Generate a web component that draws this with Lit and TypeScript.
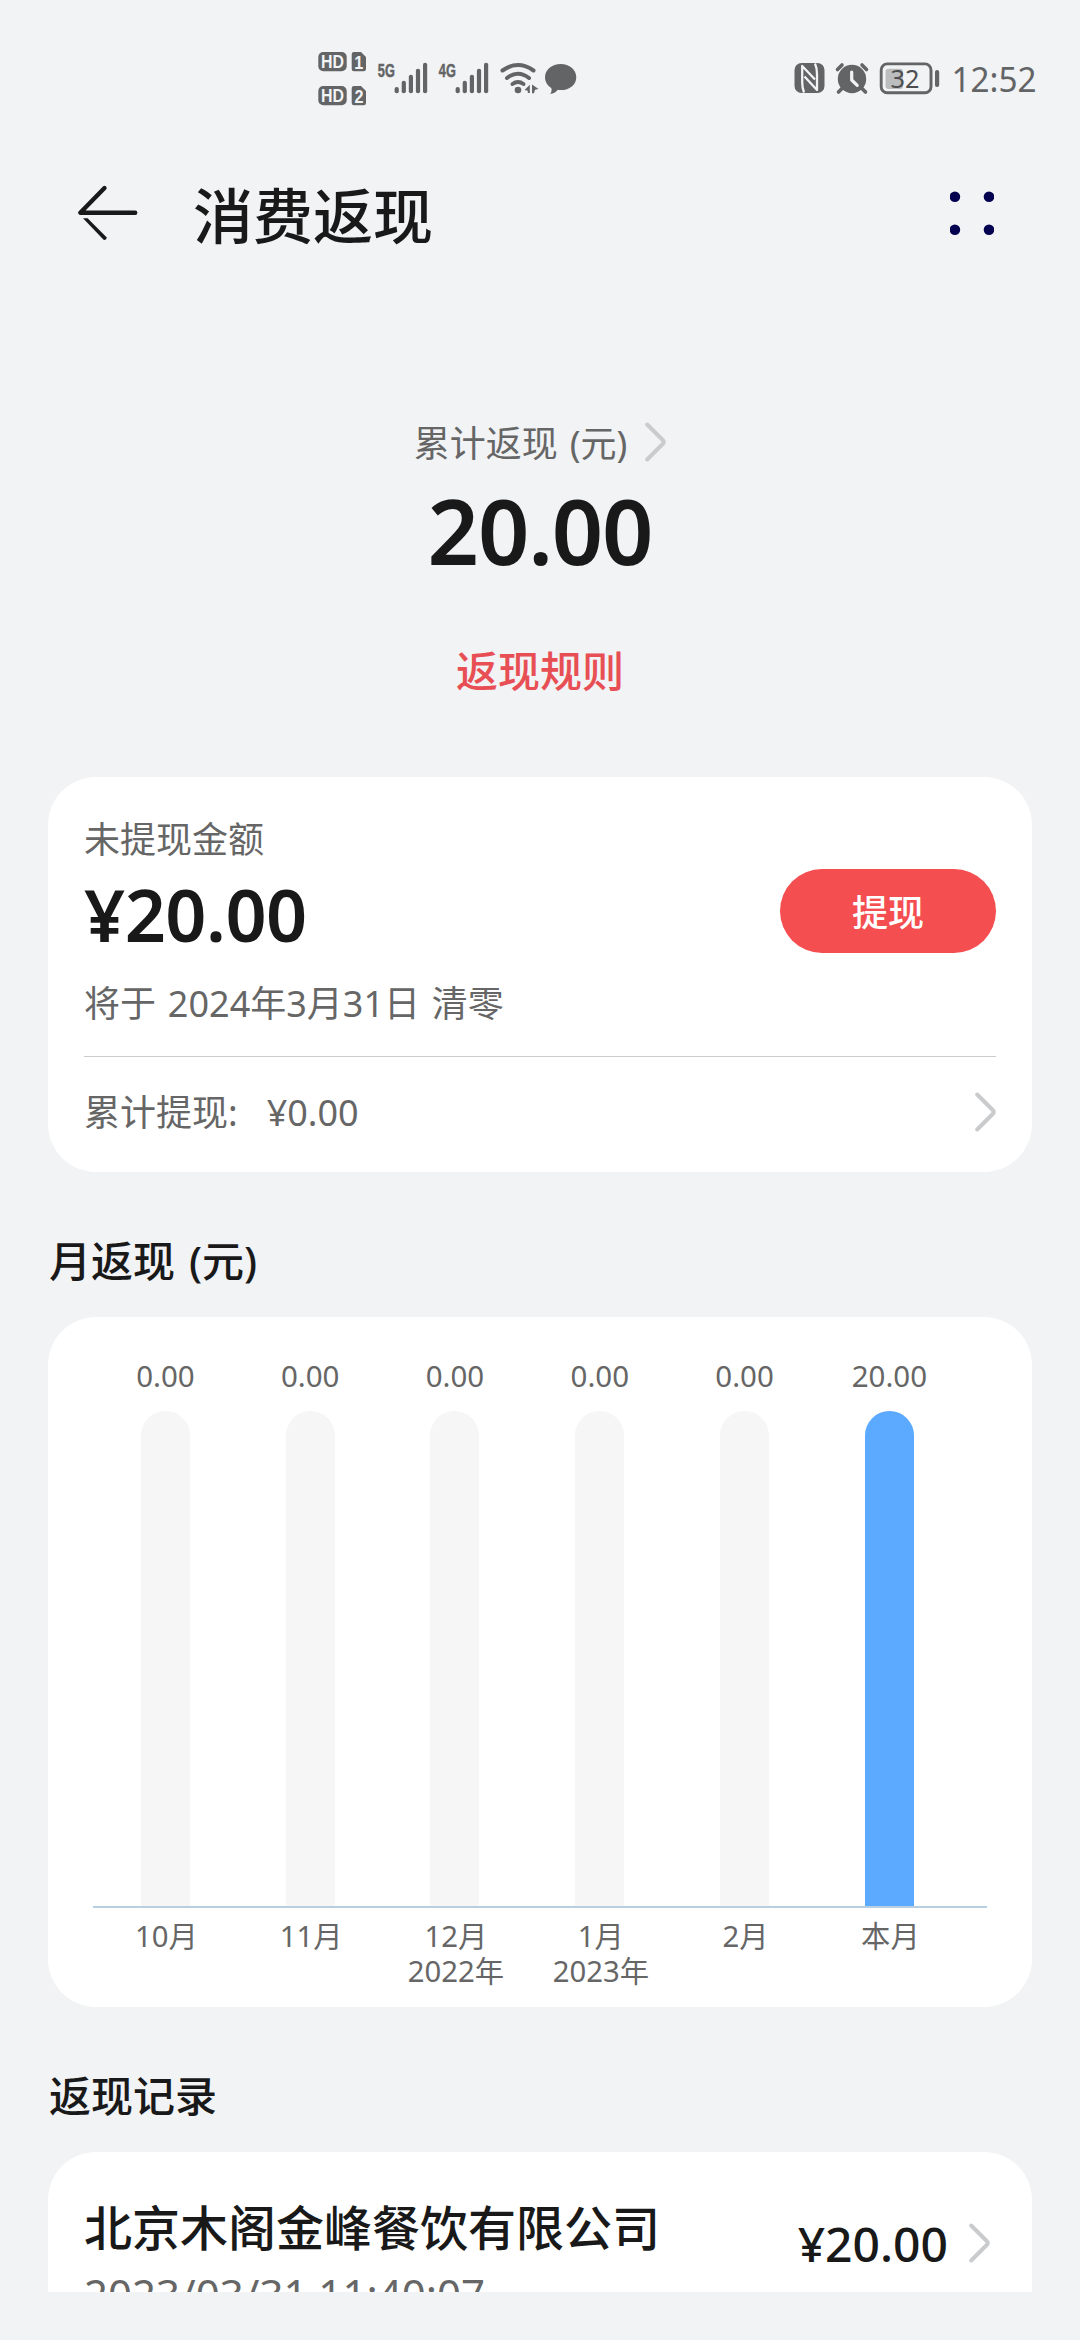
import { LitElement, html, css, svg } from "lit";
import { customElement, property } from "lit/decorators.js";

interface Month {
  value: string;
  ratio: number;
  label: string;
  year?: string;
}

const MONTHS: Month[] = [
  { value: "0.00", ratio: 0, label: "10月" },
  { value: "0.00", ratio: 0, label: "11月" },
  { value: "0.00", ratio: 0, label: "12月", year: "2022年" },
  { value: "0.00", ratio: 0, label: "1月", year: "2023年" },
  { value: "0.00", ratio: 0, label: "2月" },
  { value: "20.00", ratio: 1, label: "本月" },
];

@customElement("status-bar")
export class StatusBar extends LitElement {
  static styles = css`
    :host {
      display: flex;
      align-items: center;
      height: 156px;
      padding: 0 44px 0 318px;
      color: #636466;
      font-family: "Noto Sans", "Noto Sans CJK SC", sans-serif;
    }
    svg {
      display: block;
      flex: none;
      height: 60px;
      fill: currentColor;
      overflow: visible;
    }
    .hd { width: 48px; margin-right: 11px; }
    .signal { width: 52px; margin-right: 9px; }
    .wifi { width: 40px; margin-right: 6px; }
    .bubble { width: 32px; }
    .grow { flex: 1; }
    .nfc { width: 31px; margin-right: 10px; }
    .alarm { width: 34px; margin-right: 11px; }
    .battery { width: 60px; margin-right: 12px; }
    .clock { width: 84px; }
    .label { font-family: "Liberation Sans", sans-serif; font-weight: 700; }
    .net { stroke: currentColor; stroke-width: 0.5; }
    .knock { fill: #f1f3f5; }
  `;

  private signal(name: string) {
    const bars = [87, 80.7, 74.7, 68.7, 62.7];
    return html`<svg class="signal" viewBox="377 48 52 60">
      <text class="label net" x="377.8" y="76.500" font-size="19" textLength="17" lengthAdjust="spacingAndGlyphs">${name}</text>
      ${bars.map((top, i) => svg`<rect x=${394.6 + i * 7.1} y=${top} width="4.2" height=${93.2 - top} rx="2"></rect>`)}
    </svg>`;
  }

  render() {
    return html`
      <svg class="hd" viewBox="318 48 48 60">
        <rect x="318.3" y="52" width="28.4" height="19.3" rx="5"></rect>
        <path d="M354 52h7l5 5v12a2.3 2.3 0 0 1-2.3 2.3h-9.7a2.3 2.3 0 0 1-2.3-2.3v-14.7a2.3 2.3 0 0 1 2.3-2.3z"></path>
        <rect x="318.3" y="86" width="28.4" height="19.3" rx="5"></rect>
        <path d="M354 86h7l5 5v12a2.3 2.3 0 0 1-2.3 2.3h-9.7a2.3 2.3 0 0 1-2.3-2.3v-14.7a2.3 2.3 0 0 1 2.3-2.3z"></path>
        <text class="label knock" x="321" y="68" font-size="18" textLength="23" lengthAdjust="spacingAndGlyphs">HD</text>
        <text class="label knock" x="354.2" y="68.5" font-size="18" textLength="9" lengthAdjust="spacingAndGlyphs">1</text>
        <text class="label knock" x="321" y="102" font-size="18" textLength="23" lengthAdjust="spacingAndGlyphs">HD</text>
        <text class="label knock" x="354.4" y="102.5" font-size="18" textLength="9" lengthAdjust="spacingAndGlyphs">2</text>
      </svg>
      ${this.signal("5G")} ${this.signal("4G")}
      <svg class="wifi" viewBox="497 48 40 60">
        <g fill="none" stroke="currentColor" stroke-width="4" stroke-linecap="round">
          <path d="M500.5 70.5q15.500-11 31 0"></path>
          <path d="M505 78q11-8.500 22 0"></path>
          <path d="M510.500 84q5.500-4 11 0"></path>
        </g>
        <circle cx="516" cy="90" r="3.3"></circle>
        <path d="M522.600 90l5.200-5.300v8.300h-2v-2.200zM530 84.500l6.500 4.500-3.500.8-1 3.400h-2z"></path>
      </svg>
      <svg class="bubble" viewBox="544 48 32 60">
        <path d="M559.700 64c8.700 0 15.600 5.700 15.600 13.200s-6.900 12.900-15.200 12.900c-1.500 0-2.400-.1-3.300-.3-2 2.500-4.500 4-7.600 4.300 1.500-2.100 1.700-4 1.100-6.100-3.800-2.400-6.300-6.100-6.300-10.800 0-7.500 7-13.200 15.700-13.200z"></path>
      </svg>
      <span class="grow"></span>
      <svg class="nfc" viewBox="793 48 31 60">
        <rect x="793.5" y="63" width="30" height="30" rx="7"></rect>
        <g fill="none" stroke="#f1f3f5" stroke-width="2.300" stroke-linejoin="round">
          <path d="M803 92.500Q801.200 88 801.200 82V66L814 79.500"></path>
          <path d="M814 63.500Q816 68 816 74V90L803.500 76.500"></path>
        </g>
      </svg>
      <svg class="alarm" viewBox="834 48 34 60">
        <circle cx="851" cy="79" r="14.2"></circle>
        <path d="M836.500 69.500l4.500-4.500M865.500 69.500l-4.500-4.500M841.500 88l-4 4M860.500 88l4 4" fill="none" stroke="currentColor" stroke-width="3.600" stroke-linecap="round"></path>
        <path d="M850.700 72v8l5.500 5.300" fill="none" stroke="#f1f3f5" stroke-width="3.200" stroke-linecap="round" stroke-linejoin="round"></path>
      </svg>
      <svg class="battery" viewBox="880 48 60 60">
        <rect x="885.5" y="68.700" width="17.500" height="20.300" rx="3" fill="#bcbdbf"></rect>
        <rect x="881.200" y="63.900" width="49.800" height="28.800" rx="6" fill="none" stroke="currentColor" stroke-width="2.900"></rect>
        <rect x="935" y="70" width="4.200" height="17" rx="2"></rect>
        <text x="890.500" y="88" font-size="26" fill="#4d4e50" textLength="29" lengthAdjust="spacingAndGlyphs">32</text>
      </svg>
      <svg class="clock" viewBox="952 48 84 60">
        <text x="951.500" y="92" font-size="34.500" textLength="85" lengthAdjust="spacingAndGlyphs">12:52</text>
      </svg>
    `;
  }
}

@customElement("chevron-icon")
export class ChevronIcon extends LitElement {
  static styles = css`
    :host { display: block; flex: none; }
    svg {
      display: block;
      width: 21px;
      height: 40px;
      fill: none;
      stroke: #cacbcc;
      stroke-width: 4;
      stroke-linecap: round;
      stroke-linejoin: round;
    }
  `;

  render() {
    return html`<svg viewBox="0 0 21 40">
      <path d="M2.200 2.500L17.700 18q2 2 0 4L2.200 37.500"></path>
    </svg>`;
  }
}

@customElement("month-column")
export class MonthColumn extends LitElement {
  @property({ attribute: false }) month!: Month;

  static styles = css`
    :host {
      display: flex;
      flex-direction: column;
      align-items: center;
      width: 144.800px;
      font-size: 30px;
      color: #666;
    }
    .value { height: 40px; line-height: 40px; margin-bottom: 15px; font-size: 29.500px; }
    .track {
      display: flex;
      align-items: flex-end;
      width: 49px;
      height: 495px;
      border-radius: 24.500px 24.500px 0 0;
      background: #f6f6f6;
      overflow: hidden;
    }
    .fill { width: 100%; background: #5caaff; }
    .labels { margin-top: 13px; padding-left: 2px; font-size: 29.300px; line-height: 35px; text-align: center; }
  `;

  render() {
    const m = this.month;
    return html`
      <div class="value">${m.value}</div>
      <div class="track"><div class="fill" style="height:${m.ratio * 100}%"></div></div>
      <div class="labels">
        <div>${m.label}</div>
        ${m.year ? html`<div>${m.year}</div>` : null}
      </div>
    `;
  }
}

@customElement("app-root")
export class AppRoot extends LitElement {
  static styles = css`
    :host {
      display: block;
      box-sizing: border-box;
      width: 1080px;
      height: 2340px;
      overflow: hidden;
      background: #f1f3f5;
      color: #191919;
      font-family: "Noto Sans", "Noto Sans CJK SC", sans-serif;
    }
    .header {
      display: flex;
      align-items: center;
      height: 114px;
      padding: 0 86px 0 76px;
    }
    .back { width: 64px; height: 60px; }
    .title { flex: 1; margin-left: 53px; padding-top: 6px; font-size: 60px; line-height: 80px; font-weight: 500; }
    .more { width: 44px; height: 44px; }
    .hero { display: flex; flex-direction: column; align-items: center; padding-top: 150px; }
    .hero-label {
      display: flex;
      align-items: center;
      height: 48px;
      line-height: 48px;
      font-size: 36px;
      word-spacing: 2.500px;
      color: #666;
    }
    .hero-label chevron-icon { margin: -4px 0 0 18px; }
    .hero-amount { margin-top: 12px; font-size: 90px; line-height: 100px; font-weight: 600; letter-spacing: -1.200px; }
    .rules { margin: 61px 0 76px; font-size: 42px; line-height: 60px; font-weight: 500; color: #e84f54; }
    .card { margin: 0 48px; border-radius: 48px; background: #fff; }
    .balance { box-sizing: border-box; height: 395px; padding: 38px 36px 0; }
    .balance-top { display: flex; justify-content: space-between; align-items: flex-start; }
    .muted { font-size: 36px; line-height: 50px; word-spacing: 2.500px; color: #666; }
    .amount { margin: 4px 0 20px; font-size: 72px; line-height: 90px; font-weight: 600; letter-spacing: -0.500px; }
    .withdraw {
      margin-top: 54px;
      width: 216px;
      height: 84px;
      border-radius: 42px;
      background: #f44e50;
      color: #fff;
      font-size: 36px;
      line-height: 87px;
      font-weight: 500;
      text-align: center;
    }
    .divider { height: 1px; margin-top: 27px; background: #cccccc; }
    .total { display: flex; align-items: center; height: 112px; }
    .total chevron-icon { margin-top: -3px; }
    .total-value { flex: 1; margin-left: 29px; }
    .section { height: 113px; padding: 32px 49px 0; font-size: 42px; line-height: 113px; font-weight: 500; word-spacing: 3px; }
    .chart { box-sizing: border-box; height: 690px; padding: 39px 45px 0; }
    .columns {
      display: flex;
      height: 650px;
      background: linear-gradient(#b8cfe2, #b8cfe2) 0 550px / 100% 2px no-repeat;
    }
    .record {
      box-sizing: border-box;
      display: flex;
      align-items: flex-start;
      height: 140px;
      padding: 46px 42px 0 36px;
      border-radius: 48px 48px 0 0;
      overflow: hidden;
    }
    .record-main { flex: 1; }
    .record-name { font-size: 48px; line-height: 60px; font-weight: 500; }
    .record-date { margin-top: 11px; font-size: 42px; line-height: 50px; color: #666; }
    .record-amount { margin-top: 21px; font-size: 48px; line-height: 50px; font-weight: 500; }
    .record chevron-icon { margin: 25px 0 0 21px; }
  `;

  render() {
    return html`
      <status-bar></status-bar>
      <div class="header">
        <svg class="back" viewBox="76 183 64 60" fill="none" stroke="#191919" stroke-width="4.400" stroke-linecap="round">
          <path d="M104.500 188L80.300 212.700H135.200" stroke-linejoin="round"></path>
          <path d="M83 218.300H87.600L106.800 237.500Q106.500 240.500 103.600 239.800Z" fill="#191919" stroke="none"></path>
        </svg>
        <div class="title">消费返现</div>
        <svg class="more" viewBox="950 190 44 44" fill="#03004f">
          <circle cx="954.900" cy="195.700" r="5.300"></circle>
          <circle cx="989" cy="195.700" r="5.300"></circle>
          <circle cx="954.900" cy="228.700" r="5.300"></circle>
          <circle cx="989" cy="228.700" r="5.300"></circle>
        </svg>
      </div>

      <div class="hero">
        <div class="hero-label"><span>累计返现 (元)</span><chevron-icon></chevron-icon></div>
        <div class="hero-amount">20.00</div>
        <div class="rules">返现规则</div>
      </div>

      <div class="card balance">
        <div class="balance-top">
          <div>
            <div class="muted">未提现金额</div>
            <div class="amount">¥20.00</div>
            <div class="muted">将于 2024年3月31日 清零</div>
          </div>
          <div class="withdraw">提现</div>
        </div>
        <div class="divider"></div>
        <div class="total muted">
          <span>累计提现:</span><span class="total-value">¥0.00</span><chevron-icon></chevron-icon>
        </div>
      </div>

      <div class="section">月返现 (元)</div>
      <div class="card chart">
        <div class="columns">
          ${MONTHS.map((m) => html`<month-column .month=${m}></month-column>`)}
        </div>
      </div>

      <div class="section">返现记录</div>
      <div class="card record">
        <div class="record-main">
          <div class="record-name">北京木阁金峰餐饮有限公司</div>
          <div class="record-date">2023/03/31 11:40:07</div>
        </div>
        <div class="record-amount">¥20.00</div>
        <chevron-icon></chevron-icon>
      </div>
    `;
  }
}
